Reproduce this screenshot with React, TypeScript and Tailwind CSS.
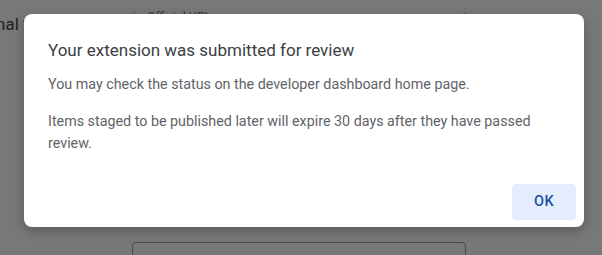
import React from "react";

const font = "font-['Roboto','Liberation_Sans',sans-serif]";

function Backdrop() {
  return (
    <div className="h-[255px] w-[602px] overflow-hidden bg-[#77787a]">
      <div className="flex">
        <div className="-ml-[4px] w-[136px] shrink-0 pt-[14px] text-[17px] leading-5 text-[#1f1f20]">
          nal fields
        </div>
        <div className="relative mt-[12px] h-[50px] w-[334px] rounded border border-t-0 border-[#4a4b4d]">
          <div className="absolute left-0 right-0 top-0 flex items-center">
            <div className="h-px w-[10px] bg-[#4a4b4d]" />
            <span className="-mt-[1px] px-[4px] text-[12.5px] leading-none text-[#3a3b3d]">Official URL</span>
            <div className="h-px flex-1 bg-[#4a4b4d]" />
          </div>
        </div>
      </div>
      <div className="ml-[132px] mt-[180px] h-[40px] w-[334px] rounded border border-[#4a4b4d]" />
    </div>
  );
}

export default function App() {
  return (
    <div className={`relative h-[255px] w-[602px] overflow-hidden ${font}`}>
      <Backdrop />
      {/* Dialog */}
      <div className="absolute left-[24px] top-[14px] flex w-[560px] flex-col rounded-lg bg-white shadow-[0_4px_12px_rgba(0,0,0,0.25)]">
        <div className="px-6 pt-6 pb-[30px]">
          <h2 className="mb-[12px] text-[17px] leading-6 text-[#3c4043]">
            Your extension was submitted for review
          </h2>
          <p className="text-[14.3px] leading-5 text-[#5f6368]">
            You may check the status on the developer dashboard home page.
          </p>
          <p className="mt-[16px] text-[14.3px] leading-[22px] text-[#5f6368]">
            Items staged to be published later will expire 30 days after they have passed review.
          </p>
        </div>
        <div className="flex justify-end px-2 pb-[7px]">
          <button className="h-9 w-16 rounded bg-[#e3edfb] text-[14.5px] font-medium tracking-wide text-[#1b4fa8]">
            OK
          </button>
        </div>
      </div>
    </div>
  );
}
